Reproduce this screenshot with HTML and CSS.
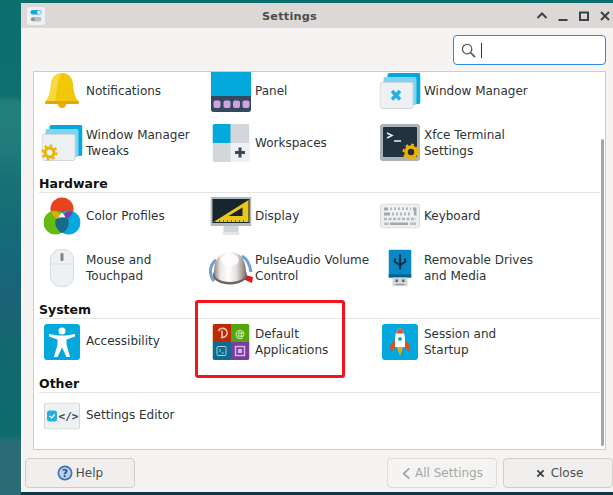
FILE: index.html
```html
<!DOCTYPE html>
<html lang="en">
<head>
<meta charset="utf-8">
<title>Settings</title>
<link rel="stylesheet" href="styles.css">
</head>
<body>
<div class="desktop">
  <div class="window">
    <header class="titlebar">
      <svg class="app-icon" viewBox="0 0 18 18"><rect width="18" height="18" rx="2" fill="#eef1f3"/><rect x="3.500" y="3" width="11" height="4.500" rx="2.200" fill="#17a6e0"/><circle cx="12" cy="5.200" r="1.800" fill="#fff"/><rect x="3.500" y="10" width="11" height="4.500" rx="2.200" fill="#b9bfc4"/><circle cx="6" cy="12.200" r="1.800" fill="#8b9298"/></svg>
      <span class="title">Settings</span>
      <div class="wm-buttons">
        <svg viewBox="0 0 12 12"><path d="M1.500 8 6 3.500 10.500 8" fill="none" stroke="#3a4148" stroke-width="2"/></svg>
        <svg viewBox="0 0 12 12"><path d="M1.500 10h9" stroke="#3a4148" stroke-width="2"/></svg>
        <svg viewBox="0 0 12 12"><path d="M2 2.500h8v7.500H2z" fill="none" stroke="#3a4148" stroke-width="2"/></svg>
        <svg viewBox="0 0 12 12"><path d="M2 2l8 8M10 2l-8 8" stroke="#3a4148" stroke-width="2"/></svg>
      </div>
    </header>
    <div class="searchrow">
      <div class="search">
        <svg viewBox="0 0 16 16"><circle cx="6.500" cy="6.500" r="5" fill="none" stroke="#555b60" stroke-width="1.400"/><path d="M10.200 10.200 15 15" stroke="#555b60" stroke-width="1.800"/></svg>
        <span class="caret"></span>
      </div>
    </div>
    <main class="panel">
      <div class="content">
        <div class="grid">
          <div class="item">
            <svg class="icon" width="36" height="38" viewBox="0 0 36 38"><path d="M18 1c-7 0-10.500 5-11 11-.5 8-2 13-5 17h32c-3-4-4.500-9-5-17C28.500 6 25 1 18 1z" fill="#f0c808"/><path d="M18 1c-7 0-10.500 5-11 11-.5 8-2 13-5 17h9C13 22 12 9 18 1z" fill="#f7da3e"/><rect x="1" y="29" width="34" height="3" rx="1.200" fill="#e0a800"/><path d="M14 32h8a4 4 0 0 1-8 0z" fill="#e8b400"/></svg>
            <span>Notifications</span>
          </div>
          <div class="item">
            <svg class="icon" width="42" height="42" viewBox="0 0 42 42"><path d="M3 0h36a2 2 0 0 1 2 2v37a3 3 0 0 1-3 3H4a3 3 0 0 1-3-3V2a2 2 0 0 1 2-2z" fill="#03a9dd"/><path d="M1 26h40v13a3 3 0 0 1-3 3H4a3 3 0 0 1-3-3z" fill="#34495e"/><rect x="3.500" y="30.500" width="7" height="7.500" rx="2" fill="#cfa3e0"/><rect x="13.500" y="30.500" width="7" height="7.500" rx="2" fill="#cfa3e0"/><rect x="23" y="30.500" width="7" height="7.500" rx="2" fill="#cfa3e0"/><rect x="32.500" y="30.500" width="7" height="7.500" rx="2" fill="#cfa3e0"/></svg>
            <span>Panel</span>
          </div>
          <div class="item">
            <svg class="icon" width="41" height="36" viewBox="0 0 41 36"><rect x="8" y="0" width="33" height="31" rx="2" fill="#03a9dd"/><rect x="4" y="4" width="33" height="28" rx="2" fill="#7fd4f2"/><rect x=".5" y="9.500" width="33" height="26" rx="2" fill="#eef1f3" stroke="#d3d7da"/><path d="M12.500 18l8 8.500M20.500 18l-8 8.500" stroke="#27aee3" stroke-width="3.500"/></svg>
            <span>Window Manager</span>
          </div>
          <div class="item">
            <svg class="icon" width="41" height="36" viewBox="0 0 41 36"><rect x="8" y="0" width="33" height="31" rx="2" fill="#03a9dd"/><rect x="4" y="4" width="33" height="28" rx="2" fill="#7fd4f2"/><rect x=".5" y="9.500" width="33" height="26" rx="2" fill="#eef1f3" stroke="#d3d7da"/><circle cx="8" cy="27.500" r="4.500" fill="#eef1f3" stroke="#e8b400" stroke-width="3"/><circle cx="8" cy="27.500" r="7" fill="none" stroke="#e8b400" stroke-width="2.200" stroke-dasharray="2.700 2.800"/></svg>
            <span>Window Manager<br>Tweaks</span>
          </div>
          <div class="item">
            <svg class="icon" width="37" height="38" viewBox="0 0 37 38"><rect width="37" height="38" rx="2" fill="#d3d7da"/><path d="M2 0h16v19H0V2a2 2 0 0 1 2-2z" fill="#03a9dd"/><path d="M18 19h19v17a2 2 0 0 1-2 2H18z" fill="#eef1f3"/><path d="M27.500 23.500v10M22.500 28.500h10" stroke="#34495e" stroke-width="3"/></svg>
            <span>Workspaces</span>
          </div>
          <div class="item">
            <svg class="icon" width="40" height="38" viewBox="0 0 40 38"><rect width="40" height="37" rx="3" fill="#aab2b8"/><rect x="3" y="3" width="34" height="30" rx="1" fill="#22323e"/><path d="M7 9l5 2.500L7 14M14 17h7" stroke="#eef1f3" stroke-width="1.500" fill="none"/><circle cx="31" cy="28" r="5" fill="#2a2a20" stroke="#e8b400" stroke-width="3.500"/><circle cx="31" cy="28" r="7.400" fill="none" stroke="#e8b400" stroke-width="2.200" stroke-dasharray="2.800 3"/></svg>
            <span>Xfce Terminal<br>Settings</span>
          </div>
        </div>
        <h2>Hardware</h2>
        <div class="grid">
          <div class="item">
            <svg class="icon" width="37" height="38" viewBox="0 0 37 38"><circle cx="18.500" cy="12" r="11.500" fill="#e8431f"/><circle cx="12" cy="25.500" r="12" fill="#66bb11"/><circle cx="25" cy="25.500" r="12" fill="#05a8df"/><path d="M7.700 14.300a12 12 0 0 1 11 4.700 11.500 11.500 0 0 1-3 3.800A11.500 11.500 0 0 1 7.700 14.300z" fill="#dcae12"/><path d="M29.300 14.300a12 12 0 0 0-11 4.700c1 1.500 2 2.800 3 3.800a11.500 11.500 0 0 0 8-8.500z" fill="#7b3fa0"/><path d="M18.500 15.500a12 12 0 0 0-3.400 5h6.800a12 12 0 0 0-3.400-5z" fill="#fff"/><path d="M18.500 20.500a11.500 11.500 0 0 0-6.500 2 12 12 0 0 0 6.500 13.500 12 12 0 0 0 6.500-13.500 11.500 11.500 0 0 0-6.500-2z" fill="#176a88"/></svg>
            <span>Color Profiles</span>
          </div>
          <div class="item">
            <svg class="icon" width="41" height="38" viewBox="0 0 41 38"><rect y="0" width="41" height="29" rx="1" fill="#b1bac0"/><rect x="2" y="2" width="37" height="24" fill="#17252f"/><path d="M3 25 38 3v22z" fill="#e8c61a"/><path d="M18 19 32 10.500V19z" fill="#17252f"/><path d="M5 25v-2M9 25v-2M13 25v-2M17 25v-2M21 25v-2M25 25v-2M29 25v-2M33 25v-2" stroke="#7b6a10"/><rect x="13" y="29" width="15" height="6" fill="#cfd4d8"/><rect x="12" y="35" width="17" height="3" rx="1" fill="#e4e7e9"/></svg>
            <span>Display</span>
          </div>
          <div class="item">
            <svg class="icon" width="40" height="25" viewBox="0 0 40 25"><rect x=".5" y=".5" width="39" height="24" rx="3" fill="#eef0f2" stroke="#d2d6d9"/><g fill="#a2a8ad"><rect x="4" y="4" width="4" height="3"/><path d="M10 5.200h21" fill="none" stroke="#b3b8bc" stroke-width="2.500" stroke-dasharray="2 2"/><path d="M33 4h3.500v8H34V7h-1z"/><rect x="4" y="9" width="6" height="3"/><path d="M12 10.500h20" stroke="#b3b8bc" stroke-width="3" stroke-dasharray="2 2"/><path d="M4 15.500h32" stroke="#b3b8bc" stroke-width="2.500" stroke-dasharray="3 1.500"/><rect x="4" y="19" width="5" height="2.500" opacity=".7"/><rect x="10" y="19" width="18" height="2.500"/><rect x="30" y="19" width="6" height="2.500" opacity=".7"/></g></svg>
            <span>Keyboard</span>
          </div>
          <div class="item">
            <svg class="icon" width="24" height="38" viewBox="0 0 24 38"><rect x=".5" y=".5" width="23" height="37" rx="10" fill="#eef1f3" stroke="#d5dadd"/><path d="M1 15h22" stroke="#dde1e4"/><rect x="10.500" y="4" width="3" height="8" rx="1" fill="#7d858b"/></svg>
            <span>Mouse and<br>Touchpad</span>
          </div>
          <div class="item">
            <svg class="icon" width="44" height="34" viewBox="0 0 44 34"><defs><linearGradient id="ridges" x1="0" x2="1" y1="0" y2="0"><stop offset="0" stop-color="#8d8480"/><stop offset=".2" stop-color="#ebe6e4"/><stop offset=".45" stop-color="#fff"/><stop offset=".7" stop-color="#e6dede"/><stop offset="1" stop-color="#7e7571"/></linearGradient></defs><path d="M5 30C-1 22 1 14 7 9M33 5c5 3 8 9 9 16" fill="none" stroke="#6f9fd6" stroke-width="3"/><path d="M36 24l8 2-1 6-9-4z" fill="#dd1a1a"/><ellipse cx="21" cy="24" rx="17" ry="9.500" fill="#6e6661"/><path d="M5 22C5 8 11 1 21 1s16 7 16 21c0 5-7 9-16 9S5 27 5 22z" fill="url(#ridges)"/><ellipse cx="21" cy="9" rx="9" ry="6" fill="#fff" opacity=".8"/></svg>
            <span>PulseAudio Volume<br>Control</span>
          </div>
          <div class="item">
            <svg class="icon" width="23" height="37" viewBox="0 0 23 37"><path d="M2 0h19a2 2 0 0 1 2 2v26H0V2a2 2 0 0 1 2-2z" fill="#0789c8"/><rect y="25" width="23" height="3" fill="#0a5f85"/><rect x="4" y="28" width="15" height="9" fill="#d2d7da"/><rect x="7" y="30" width="2.500" height="2.500" fill="#5f6b72"/><rect x="13.500" y="30" width="2.500" height="2.500" fill="#5f6b72"/><rect x="7" y="34.500" width="9" height="1" fill="#8a949a"/><path d="M11.500 5v15M6.500 9v3.500l5 3 5-3V9" fill="none" stroke="#12303f" stroke-width="2"/></svg>
            <span>Removable Drives<br>and Media</span>
          </div>
        </div>
        <h2>System</h2>
        <div class="grid">
          <div class="item">
            <svg class="icon" width="36" height="36" viewBox="0 0 36 36"><rect width="36" height="36" rx="3" fill="#03a9dd"/><circle cx="18" cy="7" r="3.500" fill="#fff"/><path d="M5 12.500v-2.500l9 1.500h8l9-1.500v2.500l-8.500 3v5L26 33h-3.500L18 23.500 13.500 33H10l3.500-12.500v-5z" fill="#fff"/></svg>
            <span class="lift">Accessibility</span>
          </div>
          <div class="item">
            <svg class="icon" width="37" height="36" viewBox="0 0 37 36"><path d="M2 0h16.500v18H0V2a2 2 0 0 1 2-2z" fill="#bc2a05"/><path d="M18.500 0H35a2 2 0 0 1 2 2v16H18.500z" fill="#53a60d"/><path d="M0 18h18.500v18H2a2 2 0 0 1-2-2z" fill="#0c6b8f"/><path d="M18.500 18H37v16a2 2 0 0 1-2 2H18.500z" fill="#7a3d9c"/><path d="M6 7a4.500 4.500 0 1 1 2.500 6M9.500 6.500v8" fill="none" stroke="#f3c0b0" stroke-width="1.700"/><text x="27.500" y="13" class="at">@</text><rect x="4.500" y="22.500" width="9" height="9" rx="1" fill="none" stroke="#a8d4e4"/><path d="M6.500 25l2 1.500-2 1.500M9 29h2.500" stroke="#a8d4e4" fill="none" stroke-width=".8"/><rect x="23" y="22.500" width="9" height="9" fill="none" stroke="#d7b6e6" stroke-width="1.500"/><rect x="25.500" y="25" width="4" height="4" fill="#d7b6e6"/></svg>
            <span>Default<br>Applications</span>
          </div>
          <div class="item">
            <svg class="icon" width="36" height="36" viewBox="0 0 36 36"><rect width="36" height="36" rx="3" fill="#03a9dd"/><path d="M18 4c-4 3-5 7-5 11l-.5 8h11l-.5-8c0-4-1-8-5-11z" fill="#fff"/><path d="M18 4c-2 1.500-3 3-4 5.500h8C21 7 20 5.500 18 4z" fill="#e4532a"/><circle cx="18" cy="15" r="2" fill="#1aa6df"/><path d="M13 15l-5 7 1 6 4-4zM23 15l5 7-1 6-4-4z" fill="#d9512c"/><path d="M15 23h6l-3 9z" fill="#f4a900"/></svg>
            <span>Session and<br>Startup</span>
          </div>
        </div>
        <h2>Other</h2>
        <div class="grid">
          <div class="item">
            <svg class="icon" width="36" height="27" viewBox="0 0 36 27"><rect x=".5" y=".5" width="35" height="26" rx="2" fill="#eef1f3" stroke="#d3d7da"/><rect x="3" y="8" width="10" height="11" rx="2.500" fill="#27aee3"/><path d="M5.500 13.500l2.200 2 3-3.500" stroke="#fff" stroke-width="1.200" fill="none"/><text x="24.500" y="17.500" class="code">&lt;/&gt;</text></svg>
            <span class="lift">Settings Editor</span>
          </div>
        </div>
      </div>
      <div class="scrollbar"></div>
    </main>
    <footer class="footer">
      <button class="btn">
        <svg viewBox="0 0 16 16"><circle cx="8" cy="8" r="7.500" fill="#3b73b9"/><circle cx="8" cy="8" r="5.800" fill="#bcd3ee"/><text x="8" y="12" class="qmark">?</text></svg>
        Help
      </button>
      <div class="footer-right">
        <button class="btn disabled">
          <svg viewBox="0 0 10 14"><path d="M8 1.500 2 7l6 5.500" fill="none" stroke="#a4a8aa" stroke-width="2"/></svg>
          All Settings
        </button>
        <button class="btn btn-close">
          <svg class="close-x" viewBox="0 0 10 10"><path d="M1.500 1.500l7 7M8.500 1.500l-7 7" stroke="#3a4148" stroke-width="2"/></svg>
          Close
        </button>
      </div>
    </footer>
  </div>
  <div class="highlight"></div>
</div>
</body>
</html>
```
FILE: styles.css
```css
* { box-sizing: border-box; }
html, body { margin: 0; padding: 0; height: 100%; overflow: hidden; }
body { font-family: "DejaVu Sans", sans-serif; font-size: 12px; color: #2e3436; }
.desktop {
  position: relative; width: 613px; height: 495px; overflow: hidden;
  background: linear-gradient(180deg,
    #0c6f6d 0, #0d706e 96px, #22807c 102px, #1f7c7a 150px, #177274 180px,
    #14697a 250px, #1d6277 300px, #12686f 345px, #0d6c6c 435px, #2a6b75 442px, #2a6b75 495px);
}
.window {
  position: absolute; left: 21px; top: 3px; width: 596px; height: 489px;
  background: #f5f4f2; border-radius: 4px 4px 0 0;
  display: flex; flex-direction: column;
  box-shadow: 0 3px 0 #0c3b47;
}
.titlebar {
  height: 25px; flex: none; background: #dcd8d5; display: flex; align-items: center;
  padding: 0 4px 0 6px; position: relative; font-weight: bold; font-size: 11.300px; color: #4a4d4f;
}
.app-icon { width: 18px; height: 18px; }
.title { position: absolute; left: 241px; top: 7px; letter-spacing: .2px; }
.wm-buttons { margin-left: auto; display: flex; gap: 9px; margin-right: 2px; }
.wm-buttons svg { width: 12px; height: 12px; }
.searchrow { flex: none; height: 43px; display: flex; justify-content: flex-end; align-items: flex-start; padding: 7px 11px 0 0; }
.search {
  width: 153px; height: 30px; background: #fff; border: 1px solid #2f86e6; border-radius: 4px;
  display: flex; align-items: center; padding-left: 7px; gap: 5px;
}
.search svg { width: 15px; height: 15px; }
.caret { width: 1px; height: 15px; background: #333; }
.panel {
  flex: none; height: 379px; margin: 0 11px 0 12px; background: #fff;
  border: 1px solid #cfcdca; overflow: hidden; position: relative;
}
.content { margin-top: -4px; padding: 0 5px; }
.grid { display: grid; grid-template-columns: repeat(3, 169px); row-gap: 6px; }
.item { height: 46px; display: flex; align-items: center; line-height: 16px; padding-left: 47px; position: relative; }
.lift { margin-bottom: 2px; }
.icon { position: absolute; left: 23px; top: 50%; transform: translate(-50%, -50%); }
h2 {
  margin: 0; height: 28px; width: 561px; font-size: 12.500px; font-weight: bold; color: #111;
  display: flex; align-items: flex-end; padding-bottom: 1px; line-height: 14px;
  border-bottom: 1px solid #e4e4e2;
}
.grid:first-child + h2 { height: 27px; }
.scrollbar { position: absolute; right: 1px; top: 67px; bottom: 3px; width: 3px; background: #a6a6a4; border-radius: 2px; }
.footer { flex: 1; display: flex; justify-content: space-between; padding: 8px 4px 5px; }
.footer-right { display: flex; gap: 6px; }
.btn {
  width: 110px; height: 30px; background: #f1efed; border: 1px solid #d0cecb; border-radius: 4px;
  font: inherit; font-size: 12px; color: #4a4f52; display: flex; align-items: center; justify-content: center; gap: 3px; padding: 0;
}
.btn svg { width: 16px; height: 16px; }
.btn.disabled { background: #f5f4f2; color: #a4a8aa; border-color: #dedcd9; }
.btn-close { padding-left: 3px; }
.footer-right .btn svg { width: 11px; height: 13px; }
.footer-right .btn .close-x { width: 9px; height: 9px; margin-right: 3px; }
.qmark { font: bold 11px "DejaVu Sans", sans-serif; fill: #24548f; text-anchor: middle; }
.at { font: bold 10px "DejaVu Sans", sans-serif; fill: #cdeab0; text-anchor: middle; }
.code { font: bold 11px "DejaVu Sans Mono", monospace; fill: #3a4854; text-anchor: middle; }
.highlight { position: absolute; left: 195px; top: 300px; width: 150px; height: 78px; border: 3px solid #f5141b; border-radius: 3px; }
```
